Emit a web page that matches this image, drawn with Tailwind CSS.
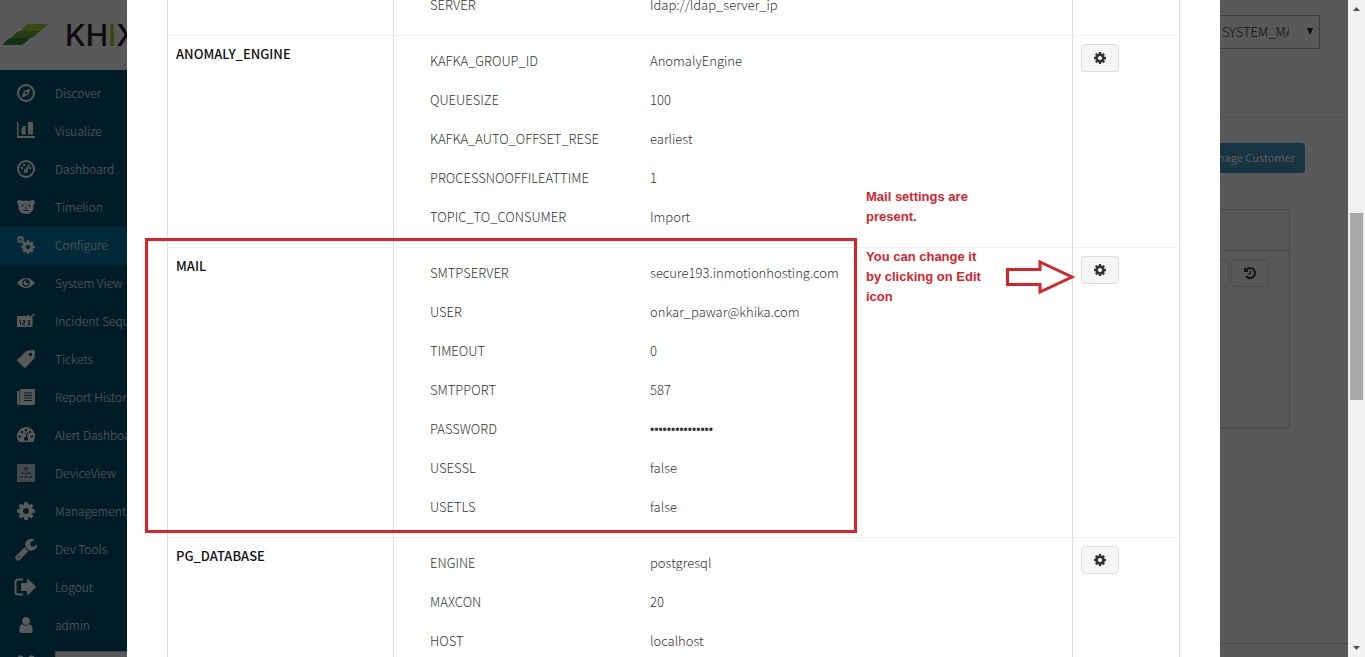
<!DOCTYPE html>
<html lang="en">
<head>
    <meta charset="UTF-8">
    <meta name="viewport" content="width=device-width, initial-scale=1.0">
    <title>Configure</title>
    <script src="https://cdn.jsdelivr.net/npm/@tailwindcss/browser@4"></script>
</head>
<body class="flex h-screen overflow-hidden bg-white font-['Noto_Sans_CJK_SC',sans-serif] text-[13px] leading-5 text-[#333]">

    <!-- shared icon shapes -->
    <svg class="hidden">
        <symbol id="cog" viewBox="0 0 1792 1792"><path d="M1152 896q0-106-75-181t-181-75-181 75-75 181 75 181 181 75 181-75 75-181zm512-109v222q0 12-8 23t-20 13l-185 28q-19 54-39 91 35 50 107 138 10 12 10 25t-9 23q-27 37-99 108t-94 71q-12 0-26-9l-138-108q-44 23-91 38-16 136-29 186-7 28-36 28h-222q-14 0-24.5-8.5t-11.5-21.5l-28-184q-49-16-90-37l-141 107q-10 9-25 9-14 0-25-11-126-114-165-168-7-10-7-23 0-12 8-23 15-21 51-66.5t54-70.5q-27-50-41-99l-183-27q-13-2-21-12.5t-8-23.5v-222q0-12 8-23t19-13l186-28q14-46 39-92-40-57-107-138-10-12-10-24 0-10 9-23 26-36 98.5-107.5t94.5-71.5q13 0 26 10l138 107q44-23 91-38 16-136 29-186 7-28 36-28h222q14 0 24.5 8.5t11.5 21.5l28 184q49 16 90 37l142-107q9-9 24-9 13 0 25 10 129 119 165 170 7 8 7 22 0 12-8 23-15 21-51 66.5t-54 70.5q26 50 41 98l183 28q13 2 21 12.5t8 23.5z"/></symbol>
    </svg>

    <div class="relative flex-1 overflow-hidden">

        <!-- page behind the dialog -->
        <header class="flex h-[70px] items-start justify-between pt-[15px] pr-7">
            <a href="#" class="flex h-10 items-center gap-[17px] text-[30px] leading-none font-medium text-[#222] font-['Inter',sans-serif]">
                <svg class="ml-0.5 h-[22px] w-[46px]" viewBox="0 0 46 22">
                    <path d="M24 1q2-1 5-1h17l-5 5q-2 2-5 2H19z" fill="#a9cf38"/>
                    <path d="M14 9q2-2 5-2h19l-5 5q-2 2-5 2H9z" fill="#6fae3e"/>
                    <path d="M5 16q2-2 5-2h18l-5 5q-2 2-5 2H0z" fill="#2b8a3c"/>
                </svg>
                <span>KH<span class="text-[#9acb1c]">I</span>XA</span>
            </a>
            <div class="relative">
                <select aria-label="Customer" class="h-[34px] w-[110px] appearance-none border border-[#aaa] pr-[30px] pl-[11px] text-[13px] font-light">
                    <option>SYSTEM_MANAGEMENT</option>
                </select>
                <svg class="pointer-events-none absolute top-[13px] right-[7px] h-[7px] w-1.5" viewBox="0 0 6 7" fill="#222"><path d="M0 0h6L3 7z"/></svg>
            </div>
        </header>

        <div class="flex h-full">
            <nav class="w-[180px] shrink-0 bg-[#005571] pt-[5px] text-xs font-light text-white">
                <a href="#" class="flex h-[38px] items-center gap-5 pb-0.5 pl-[17px]">
                    <svg class="size-[18px]" viewBox="0 0 18 18" fill="none" stroke="currentColor" stroke-width="2"><circle cx="9" cy="9" r="8"/><path d="M13.500 4.500 11 11l-6.500 2.500L7 7z" fill="currentColor" stroke="none"/><circle cx="9" cy="9" r="1.200" fill="#005571" stroke="none"/></svg>
                    Discover
                </a>
                <a href="#" class="flex h-[38px] items-center gap-5 pb-0.5 pl-[17px]">
                    <svg class="size-[18px]" viewBox="0 0 18 18" fill="currentColor"><path d="M0 0h1.500v14H18v2H0zM4.500 6h4v6.500h-4zM11 0h5v12.500h-5zM5.500 4h3v2.500h-3z"/></svg>
                    Visualize
                </a>
                <a href="#" class="flex h-[38px] items-center gap-5 pb-0.5 pl-[17px]">
                    <svg class="size-[18px]" viewBox="0 0 18 18" fill="currentColor"><circle cx="9" cy="9" r="8" fill="none" stroke="currentColor" stroke-width="2"/><circle cx="4.800" cy="8" r="1.200"/><circle cx="7" cy="5" r="1.200"/><circle cx="13.200" cy="8" r="1.200"/><path d="m12 4 1 .6-2.500 5.400a2 2 0 1 1-2-1z"/></svg>
                    Dashboard
                </a>
                <a href="#" class="flex h-[38px] items-center gap-5 pb-0.5 pl-[17px]">
                    <svg class="size-[18px]" viewBox="0 0 18 18" fill="currentColor"><path d="M0 4q0-2 2-2 2 0 3 1 4-1 8 0 1-1 3-1 2 0 2 2 0 2-1.500 3 .5 4-1.500 6.500-2 2.500-6 2.500t-6-2.500Q1 11 1.500 7 0 6 0 4z"/><g fill="#005571"><circle cx="5.500" cy="7.500" r="1"/><circle cx="12.500" cy="7.500" r="1"/><path d="M7.500 9.500h3L9 11zM6.500 12h5v1h-5z"/></g></svg>
                    Timelion
                </a>
                <a href="#" class="flex h-[38px] items-center gap-5 bg-[#0079a5] pb-0.5 pl-[17px]">
                    <svg class="size-[18px]" viewBox="0 0 18 18" fill="currentColor"><use href="#cog" x="3" y="3" width="16" height="16"/><use href="#cog" x="-1" y="-1" width="9" height="9"/></svg>
                    Configure
                </a>
                <a href="#" class="flex h-[38px] items-center gap-5 pb-0.5 pl-[17px] whitespace-nowrap">
                    <svg class="size-[18px]" viewBox="0 0 18 18" fill="currentColor"><path d="M0 9q9-10 18 0-9 10-18 0z"/><circle cx="9" cy="9" r="3.700" fill="#005571"/><path d="M9 6.500V9h2.500A2.500 2.500 0 1 1 9 6.500z"/></svg>
                    System View
                </a>
                <a href="#" class="flex h-[38px] items-center gap-5 pb-0.5 pl-[17px] whitespace-nowrap">
                    <svg class="size-[18px]" viewBox="0 0 18 18" fill="currentColor"><path d="M0 4h11l2 2.500L15.500 4v11H0z"/><path d="m10.500 3 2.500 2.500L17.500 2" fill="none" stroke="currentColor" stroke-width="1.500"/><path d="M2.500 8.500h1V13M6 8.500h2v2H6V13h2M10.500 8.500h2V13h-2m0-2h2" fill="none" stroke="#005571"/></svg>
                    Incident Sequence
                </a>
                <a href="#" class="flex h-[38px] items-center gap-5 pb-0.5 pl-[17px]">
                    <svg class="size-[18px]" viewBox="0 0 18 18" fill="currentColor" fill-rule="evenodd"><path d="M10.500.6 16.500 0q1.500 0 1.500 1.500l-.4 6q-.1.800-.6 1.300l-8.300 8.600q-.9.900-1.800 0L.6 11.300q-.9-.9 0-1.800L9.200 1.100q.5-.5 1.300-.5zM13.500 2.800a1.700 1.700 0 1 0 .01 0z"/></svg>
                    Tickets
                </a>
                <a href="#" class="flex h-[38px] items-center gap-5 pb-0.5 pl-[17px] whitespace-nowrap">
                    <svg class="size-[18px]" viewBox="0 0 18 18" fill="currentColor"><path d="M4 1h13q1 0 1 1v13q0 2-2 2H2q-2 0-2-2V4q0-1 1-1h1.500v11q0 1 .3 1t.3-1V2q0-1 .9-1z"/><path d="M7 5h8M7 7.500h8M7 10h8M7 12.500h8" stroke="#005571"/></svg>
                    Report History
                </a>
                <a href="#" class="flex h-[38px] items-center gap-5 pb-0.5 pl-[17px] whitespace-nowrap">
                    <svg class="size-[18px]" viewBox="0 0 18 18" fill="currentColor"><path d="M2 16q-2-2.500-2-6a9 9 0 0 1 18 0q0 3.500-2 6z"/><g fill="#005571"><circle cx="3" cy="10.500" r="1.200"/><circle cx="5" cy="6" r="1.200"/><circle cx="9" cy="4" r="1.200"/><circle cx="13" cy="6" r="1.200"/><circle cx="15" cy="10.500" r="1.200"/><path d="m10 6 1 .3-1 4.700a2 2 0 1 1-1.200-.2z"/></g></svg>
                    Alert Dashboard
                </a>
                <a href="#" class="flex h-[38px] items-center gap-5 pb-0.5 pl-[17px]">
                    <svg class="size-[18px]" viewBox="0 0 18 18"><path fill="#c9cbd0" d="M0 0h18v18H0z"/><path fill="#5b83b5" d="M7 3h4v3H7zM4 8h2v2H4zM12 8h2v2h-2zM3 12h3v2H3zM7.500 12h3v2h-3zM12 12h3v2h-3z"/><path d="M9 6v6M4.500 9.500h9" stroke="#5b83b5" fill="none"/></svg>
                    DeviceView
                </a>
                <a href="#" class="flex h-[38px] items-center gap-5 pb-0.5 pl-[17px]">
                    <svg class="size-[18px]" viewBox="128 128 1536 1536" fill="currentColor"><use href="#cog" width="1792" height="1792"/></svg>
                    Management
                </a>
                <a href="#" class="flex h-[38px] items-center gap-[17px] pb-0.5 pl-3.5">
                    <svg class="size-6" viewBox="0 0 1792 1792" fill="currentColor"><path d="M448 1472q0-26-19-45t-45-19-45 19-19 45 19 45 45 19 45-19 19-45zm644-420l-682 682q-37 37-90 37-52 0-91-37l-106-108q-38-36-38-90 0-53 38-91l681-681q39 98 114.500 173.500t173.500 114.500zm634-435q0 39-23 106-47 134-164.500 217.500t-258.500 83.500q-185 0-316.500-131.500t-131.500-316.500 131.500-316.500 316.500-131.500q58 0 121.500 16.500t107.500 46.500q16 11 16 28t-16 28l-293 169v224l193 107q5-3 79-48.500t135.500-81 70.500-35.500q15 0 23.500 10t8.500 25z"/></svg>
                    Dev Tools
                </a>
                <a href="#" class="flex h-[38px] items-center gap-[17px] pb-0.5 pl-3.5">
                    <svg class="size-6" viewBox="0 0 24 24" fill="currentColor"><path d="M9 4.500H4Q1.500 4.500 1.500 7v10q0 2.500 2.500 2.500h5" fill="none" stroke="currentColor" stroke-width="2"/><path d="M7 9q0-1 1-1h5V4.500q0-1.500 1-.5l7.500 7.300q.7.700 0 1.400L14 20q-1 1-1-.5V16H8q-1 0-1-1z"/></svg>
                    Logout
                </a>
                <a href="#" class="flex h-[38px] items-center gap-[17px] pb-0.5 pl-3.5">
                    <svg class="h-4 w-6" viewBox="128 128 1536 1536" fill="currentColor"><path d="M1536 1399q0 109-62.500 187t-150.500 78h-854q-88 0-150.500-78t-62.500-187q0-85 8.500-160.500t31.500-152 58.500-131 94-89 134.500-34.500q131 128 313 128t313-128q76 0 134.500 34.500t94 89 58.500 131 31.500 152 8.500 160.500zm-256-887q0 159-112.500 271.500t-271.500 112.500-271.500-112.500-112.500-271.500 112.500-271.500 271.500-112.500 271.500 112.500 112.500 271.500z"/></svg>
                    admin
                </a>
                <div class="flex items-start gap-5 pt-1.5 pl-[17px]">
                    <svg class="mt-1 size-[18px]" viewBox="0 0 18 18" fill="currentColor"><circle cx="3.500" cy="3" r="2.800"/><circle cx="14.500" cy="3" r="2.800"/><circle cx="9" cy="7" r="3.500"/></svg>
                    <input type="text" aria-label="Customer filter" class="h-7 w-28 border border-gray-300 bg-white px-2 text-black">
                </div>
            </nav>

            <main class="flex-1">
                <div class="h-12 border-b border-[#e8e8e8]"></div>
                <div class="mr-[35px] ml-5 flex justify-end border-b border-[#f3f3f3] pt-[25px] pr-2 pb-[5px]">
                    <button type="button" class="h-[30px] rounded bg-[#4094bd] px-2.5 pb-0.5 text-[11px] whitespace-nowrap text-white">Manage Customer</button>
                </div>
                <section class="mt-[30px] mr-[58px] ml-5 h-[220px] rounded border border-b-2 border-[#d5d5d5] bg-[#fdfdfd]">
                    <div class="h-[41px] border-b border-[#d5d5d5]"></div>
                    <div class="flex justify-end gap-0.5 pt-2 pr-5">
                        <button type="button" aria-label="Edit" class="h-7 w-[38px] rounded-sm border border-[#ddd]"></button>
                        <button type="button" aria-label="History" class="flex h-7 w-[38px] items-center justify-center rounded-sm border border-[#ddd] text-[#333]">
                            <svg class="size-3" viewBox="128 128 1536 1536" fill="currentColor"><path d="M1664 896q0 156-61 298t-164 245-245 164-298 61q-172 0-327-72.500t-264-204.500q-7-10-6.500-22.500t8.500-20.500l137-138q10-9 25-9 16 2 23 12 73 95 179 147t225 52q104 0 198.500-40.500t163.500-109.500 109.500-163.500 40.500-198.500-40.500-198.500-109.500-163.500-163.500-109.500-198.500-40.500q-98 0-188 35.500t-160 101.500l137 138q31 30 14 69-17 40-59 40h-448q-26 0-45-19t-19-45v-448q0-42 40-59 39-17 69 14l130 129q107-101 244.500-156.500t284.500-55.500q156 0 298 61t245 164 164 245 61 298zm-640-288v448q0 14-9 23t-23 9h-320q-14 0-23-9t-9-23v-64q0-14 9-23t23-9h224v-352q0-14 9-23t23-9h64q14 0 23 9t9 23z"/></svg>
                        </button>
                    </div>
                </section>
                <hr class="mt-[214px] border-[#ccc]">
            </main>
        </div>

        <!-- dialog -->
        <div class="absolute inset-0 overflow-hidden bg-black/65 pr-32 pl-[127px]">
            <div role="dialog" aria-label="Adapter settings" class="relative flow-root min-h-full bg-white px-10">
                <table class="-mt-[21px] w-full table-fixed border-separate border-spacing-0 text-left">
                    <colgroup>
                        <col class="w-[226px]">
                        <col>
                        <col class="w-[108px]">
                    </colgroup>
                    <tbody id="settings"></tbody>
                </table>

                <!-- notes drawn over the table -->
                <div class="pointer-events-none absolute top-[238px] left-[18px] h-[295px] w-[712px] border-3 border-[#d8232b]"></div>
                <div class="absolute top-[187px] left-[739px] w-[124px] font-['Liberation_Sans',sans-serif] text-[13px] leading-5 font-bold text-[#d8232b]">
                    <p>Mail settings are present.</p>
                    <p class="mt-5">You can change it by clicking on Edit icon</p>
                </div>
                <svg class="absolute top-[259px] left-[878px] h-9 w-[70px]" viewBox="0 0 70 36" fill="none" stroke="#d8232b" stroke-width="3"><path d="M2.500 10.500H35V3l32 15-32 15v-7.500H2.500z"/></svg>
            </div>
        </div>
    </div>

    <!-- page scrollbar -->
    <div class="flex w-[17px] shrink-0 flex-col items-center bg-[#f1f1f1] py-[7px]">
        <svg class="h-1 w-[7px]" viewBox="0 0 7 4" fill="#505050"><path d="M0 4h7L3.500 0z"/></svg>
        <div class="mt-[202px] h-[187px] w-[13px] bg-[#a8a8a8]"></div>
        <svg class="mt-auto h-1 w-[7px]" viewBox="0 0 7 4" fill="#505050"><path d="M0 0h7L3.500 4z"/></svg>
    </div>

    <script>
        const sections = [
            { name: '', items: [['SERVER', 'ldap://ldap_server_ip']] },
            { name: 'ANOMALY_ENGINE', items: [
                ['KAFKA_GROUP_ID', 'AnomalyEngine'],
                ['QUEUESIZE', '100'],
                ['KAFKA_AUTO_OFFSET_RESE', 'earliest'],
                ['PROCESSNOOFFILEATTIME', '1'],
                ['TOPIC_TO_CONSUMER', 'Import']
            ] },
            { name: 'MAIL', items: [
                ['SMTPSERVER', 'secure193.inmotionhosting.com'],
                ['USER', 'onkar_pawar@khika.com'],
                ['TIMEOUT', '0'],
                ['SMTPPORT', '587'],
                ['PASSWORD', '<span class="font-[\'Liberation_Sans\',sans-serif] text-xs leading-5">•••••••••••••••</span>'],
                ['USESSL', 'false'],
                ['USETLS', 'false']
            ] },
            { name: 'PG_DATABASE', items: [
                ['ENGINE', 'postgresql'],
                ['MAXCON', '20'],
                ['HOST', 'localhost']
            ] }
        ];

        document.getElementById('settings').innerHTML = sections.map(section => `
            <tr class="align-top">
                <th scope="row" class="border-t border-l border-t-[#f0f0f0] border-l-[#ddd] px-2 py-2 font-medium text-[#111]">${section.name}</th>
                <td class="border-t border-l border-t-[#f0f0f0] border-l-[#ddd] py-2 pl-9">
                    <dl class="font-light">
                        ${section.items.map(([key, value]) => `
                            <div class="grid h-[39px] grid-cols-[220px_1fr] pt-[7px]">
                                <dt>${key}</dt>
                                <dd>${value}</dd>
                            </div>`).join('')}
                    </dl>
                </td>
                <td class="border-x border-t border-x-[#ddd] border-t-[#f0f0f0] px-2 py-2">
                    ${section.name ? `
                    <button type="button" aria-label="Edit ${section.name}" class="flex h-7 w-[38px] items-center justify-center rounded-sm border border-[#ddd] bg-[#f5f5f5] text-[#333]">
                        <svg class="size-3.5" viewBox="0 0 1792 1792" fill="currentColor"><use href="#cog" width="1792" height="1792"/></svg>
                    </button>` : ''}
                </td>
            </tr>`).join('');
    </script>
</body>
</html>
